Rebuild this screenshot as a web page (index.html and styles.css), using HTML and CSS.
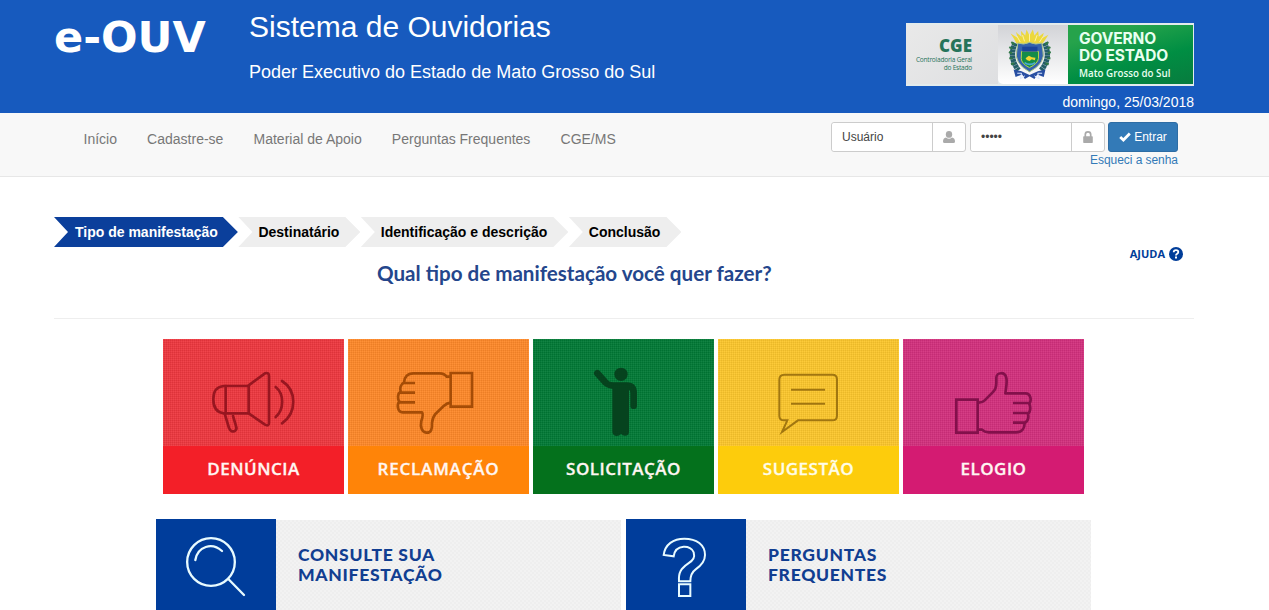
FILE: index.html
```html
<!DOCTYPE html>
<html lang="pt-br">
<head>
  <meta charset="UTF-8" />
  <meta name="viewport" content="width=device-width, initial-scale=1.0" />
  <title>e-OUV - Sistema de Ouvidorias</title>
  <link rel="stylesheet" href="styles.css">
</head>
<body>
  <!-- Header -->
  <header class="header">
    <div class="container header-row">
      <div class="brand">e-OUV</div>
      <div class="titles">
        <h1>Sistema de Ouvidorias</h1>
        <p>Poder Executivo do Estado de Mato Grosso do Sul</p>
      </div>
      <div class="header-right">
        <div class="gov-logo">
          <div class="gov-cge">
            <strong>CGE</strong>
            <span>Controladoria Geral<br>do Estado</span>
          </div>
          <div class="gov-crest">
            <svg viewBox="324 45 208 177" width="69" height="59">
              <!-- sun rays -->
              <path d="M372 86L362 70L384 84L378 66L395 80L393 62L406 76L410 58L419 76L429 58L434 76L445 63L447 80L462 68L458 84L476 74L466 90L458 101H380Z" fill="#ecd83d"/>
              <path d="M391 96L381 78M404 94L398 75M419 94V72M435 94L442 75M449 96L460 79" stroke="#fff2a0" stroke-width="3"/>
              <!-- branches -->
              <path d="M376 99Q355 142 386 181M464 99Q486 142 454 181" fill="none" stroke="#245f68" stroke-width="16" stroke-dasharray="9 1"/>
              <path d="M374 103L364 96M367 116L358 111M366 130L357 126M367 145L358 145M373 160L363 163M466 103L476 96M473 116L482 111M474 130L483 126M473 145L482 145M467 160L477 163" stroke="#317846" stroke-width="6"/>
              <!-- ribbon -->
              <path d="M371 179L395 184L419 195L444 184L467 179L462 201L442 194L434 207L419 199L405 207L397 194L377 201Z" fill="#274ea2"/>
              <path d="M382 190L395 190L391 207L405 198M457 190L444 190L448 207L434 198" fill="none" stroke="#dce8ff" stroke-width="3"/>
              <!-- shield -->
              <path d="M384 99Q401 106 419 97Q438 106 456 99L459 119Q470 159 419 186Q370 159 381 119Z" fill="#3563ad" stroke="#a9c58a" stroke-width="3"/>
              <path d="M395 124H446V145Q444 161 419 173Q394 161 394 145Z" fill="#148c49" stroke="#b4d64c" stroke-width="3"/>
              <path d="M397 110H443V125H397Z" fill="#1b459b"/>
              <path d="M407 145L417 137L426 142L437 143L435 151L426 148L419 153L411 150Z" fill="#f2d632"/>
              <path d="M404 158Q420 169 436 158" fill="none" stroke="#4ba9d4" stroke-width="5"/>
            </svg>
          </div>
          <div class="gov-state">
            <strong>GOVERNO</strong>
            <strong>DO ESTADO</strong>
            <span>Mato Grosso do Sul</span>
          </div>
        </div>
        <div class="date">domingo, 25/03/2018</div>
      </div>
    </div>
  </header>

  <!-- Menu and login -->
  <nav class="navbar">
    <div class="container nav-row">
      <ul class="menu">
        <li><a href="#">Início</a></li>
        <li><a href="#">Cadastre-se</a></li>
        <li><a href="#">Material de Apoio</a></li>
        <li><a href="#">Perguntas Frequentes</a></li>
        <li><a href="#">CGE/MS</a></li>
      </ul>
      <form class="login">
        <div class="login-fields">
          <div class="input-group">
            <input type="text" value="Usuário">
            <span class="addon">
              <svg viewBox="0 0 12 12" width="12" height="12"><ellipse cx="6" cy="3.400" rx="3.200" ry="3.400" fill="#aaa"/><path d="M3 6.500Q6 9 9 6.500Q12 7.200 12 10.500Q12 12 10.500 12H1.500Q0 12 0 10.500Q0 7.200 3 6.500Z" fill="#aaa"/></svg>
            </span>
          </div>
          <div class="input-group">
            <input type="text" value="•••••">
            <span class="addon">
              <svg viewBox="0 0 12 12" width="12" height="12"><path d="M3.300 6V3.500Q3.300 .9 6 .9T8.700 3.500V6" fill="none" stroke="#aaa" stroke-width="1.700"/><rect x="1.200" y="5.200" width="9.600" height="6.800" rx=".7" fill="#aaa"/></svg>
            </span>
          </div>
          <button type="button" class="btn">
            <svg viewBox="0 0 12 10" width="12" height="10"><path d="M1.200 5L4.400 8L10.800 1.600" fill="none" stroke="#fff" stroke-width="2.800"/></svg>
            Entrar
          </button>
        </div>
        <a href="#" class="forgot">Esqueci a senha</a>
      </form>
    </div>
  </nav>

  <main class="container">
    <!-- Steps -->
    <ol class="steps">
      <li class="active">Tipo de manifestação</li>
      <li>Destinatário</li>
      <li>Identificação e descrição</li>
      <li>Conclusão</li>
    </ol>

    <div class="question">
      <h2>Qual tipo de manifestação você quer fazer?</h2>
      <a href="#" class="help">AJUDA
        <svg viewBox="0 0 14 14" width="14" height="14"><circle cx="7" cy="7" r="7" fill="#003d99"/><path d="M4.700 5.300Q4.700 3.200 7 3.200T9.300 5.100Q9.300 6.300 8 6.900Q7 7.300 7 8.500" fill="none" stroke="#fff" stroke-width="1.800"/><rect x="6" y="9.500" width="2" height="2" fill="#fff"/></svg>
      </a>
    </div>

    <!-- Types of report -->
    <div class="tiles">
      <a href="#" class="tile red">
        <svg class="tile-icon" viewBox="24 27 543 321">
          <g fill="none" stroke="#981620" stroke-width="8" stroke-linejoin="round" stroke-linecap="round">
            <path d="M281 168H207Q175 170 175 208Q175 247 207 250H281Z"/>
            <path d="M212 168V250M281 166L330 130Q342 126 342 139V278Q342 290 330 284L281 250"/>
            <path d="M209 251L222 294Q228 308 239 303Q247 299 243 288L234 258"/>
            <path d="M362 171C388 192 388 238 362 261M381 153C426 181 426 249 381 280"/>
          </g>
        </svg>
        <span>DENÚNCIA</span>
      </a>
      <a href="#" class="tile orange">
        <svg class="tile-icon" viewBox="9 27 543 321">
          <g fill="none" stroke="#a54c06" stroke-width="8" stroke-linejoin="round">
            <path d="M317 129H381V230H317Z" stroke-linejoin="miter"/>
            <path d="M317 140H305Q298 130 284 130H205C187 130 178 142 177 157C166 163 164 176 167 184C157 191 157 207 163 214C156 222 156 247 173 247H231Q236 254 229 273C225 292 231 306 244 308C259 309 262 296 261 279Q262 263 272 251L296 228Q306 219 317 218"/>
            <path d="M174 159H210M165 188H210M162 217H210"/>
          </g>
        </svg>
        <span>RECLAMAÇÃO</span>
      </a>
      <a href="#" class="tile green">
        <svg class="tile-icon" viewBox="9 27 543 321">
          <circle cx="273" cy="133" r="20" fill="#06431e"/>
          <path d="M202 130L228 159Q236 167 257 167H290Q311 167 311 190V227" fill="none" stroke="#06431e" stroke-width="20" stroke-linecap="round" stroke-linejoin="round"/>
          <path d="M247 163H297V305Q297 317 285 317Q277 317 273 311Q269 318 259 318Q247 317 247 304Z" fill="#06431e"/>
        </svg>
        <span>SOLICITAÇÃO</span>
      </a>
      <a href="#" class="tile yellow">
        <svg class="tile-icon" viewBox="9 27 543 321">
          <g fill="none" stroke="#a17610" stroke-width="6">
            <path d="M208 134H352Q366 134 366 148V257Q366 271 352 271H249L201 306L217 271H207Q193 271 193 257V149Q193 134 208 134Z"/>
            <path d="M228 179H330M228 221H330"/>
          </g>
        </svg>
        <span>SUGESTÃO</span>
      </a>
      <a href="#" class="tile pink">
        <svg class="tile-icon" viewBox="9 27 543 321">
          <g fill="none" stroke="#83104b" stroke-width="8" stroke-linejoin="round">
            <path d="M169 209H233V308H169Z" stroke-linejoin="miter"/>
            <path d="M233 218Q246 219 254 211L278 187Q289 177 289 158V143C289 126 315 124 319 144C322 159 318 174 316 190H376C393 190 395 211 388 222C393 231 391 247 384 252C387 264 382 274 374 279C374 296 365 307 348 307H266Q254 307 246 299H233"/>
            <path d="M339 219H389M339 249H384M339 278H374"/>
          </g>
        </svg>
        <span>ELOGIO</span>
      </a>
    </div>

    <!-- Shortcuts -->
    <div class="shortcuts">
      <a href="#" class="shortcut">
        <svg viewBox="18 27 360 273" width="120" height="91">
          <g fill="none" stroke="#e8fbff" stroke-width="7" stroke-linecap="round">
            <circle cx="183" cy="156" r="71.500"/>
            <path d="M136 150C143 109 186 96 216 123M235 207L282 255"/>
          </g>
        </svg>
        <span>CONSULTE SUA<br>MANIFESTAÇÃO</span>
      </a>
      <a href="#" class="shortcut">
        <svg viewBox="18 27 360 273" width="120" height="91">
          <g fill="none" stroke="#e8fbff" stroke-width="6">
            <path d="M131 135C135 103 160 86 193 86C230 86 255 105 255 135C255 153 246 165 227 178C213 188 211 199 211 214H177C175 187 183 176 204 161C221 150 225 142 221 127C215 105 166 100 161 139Z"/>
            <path d="M177 223H211V258H177Z"/>
          </g>
        </svg>
        <span>PERGUNTAS<br>FREQUENTES</span>
      </a>
    </div>
  </main>
</body>
</html>
```
FILE: styles.css
```css
* {
  box-sizing: border-box;
}
body {
  margin: 0;
  font-family: "Liberation Sans", Arial, sans-serif;
  font-size: 14px;
  line-height: 20px;
  color: #333;
  background: #fff;
}
a {
  text-decoration: none;
}
svg {
  display: block;
}
.container {
  width: 1140px;
  margin-left: 54px;
}

/* Header */
.header {
  height: 113px;
  background: #175abe;
  color: #fff;
}
.header-row {
  display: grid;
  grid-template-columns: 195px 1fr 288px;
}
.brand {
  padding-top: 12px;
  font: bold 43px/50px "DejaVu Sans", Verdana, sans-serif;
}
.titles h1 {
  margin: 10px 0 0;
  font-size: 30px;
  line-height: 34px;
  font-weight: normal;
}
.titles p {
  margin: 18px 0 0;
  font-size: 18px;
  line-height: 20px;
}
.header-right {
  padding-top: 23px;
}
.gov-logo {
  display: flex;
  height: 63px;
  padding: 2px 1px 2px 0;
  background: #e3ebec;
}
.gov-cge {
  width: 92px;
  padding: 12px 26px 0 0;
  background: linear-gradient(135deg, #e9e9e9, #dedfe1);
  color: #26735a;
  text-align: right;
}
.gov-cge strong {
  display: block;
  font: 800 17px/18px "Open Sans", sans-serif;
}
.gov-cge span {
  display: block;
  margin-left: -10px;
  padding-top: 1px;
  font: 6.5px/8px "Open Sans", sans-serif;
  letter-spacing: -0.2px;
  white-space: nowrap;
}
.gov-crest {
  width: 70px;
  border-radius: 0 0 0 5px;
  background: linear-gradient(#d2d3d7, #fff);
}
.gov-state {
  flex: 1;
  padding: 5px 0 0 11px;
  background: linear-gradient(165deg, #26a34b 20%, #008e43 60%, #087b3e);
  color: #e8fff0;
}
.gov-state strong {
  display: block;
  font: bold 15.5px/17px Inter, sans-serif;
  letter-spacing: -0.1px;
  white-space: nowrap;
}
.gov-state span {
  display: block;
  padding-top: 2px;
  font: 600 9.8px/15px "Open Sans", sans-serif;
  white-space: nowrap;
}
.date {
  margin-top: 6px;
  text-align: right;
}

/* Menu */
.navbar {
  height: 64px;
  background: #f8f8f8;
  border-bottom: 1px solid #e7e7e7;
}
.nav-row {
  display: flex;
  justify-content: space-between;
  padding: 0 16px 0 14px;
}
.menu {
  display: flex;
  gap: 0.15px;
  margin: 0;
  padding: 0 0 0 0.5px;
  list-style: none;
}
.menu a {
  display: block;
  padding: 16px 15px;
  color: #777;
}
.login {
  padding-top: 9px;
  font-size: 12px;
  text-align: right;
}
.login-fields {
  display: flex;
}
.input-group {
  display: flex;
  width: 135px;
  height: 30px;
  margin-right: 4px;
  border: 1px solid #ccc;
  border-radius: 3px;
  background: #fff;
}
.input-group + .input-group {
  margin-right: 3px;
}
.input-group input {
  width: 101px;
  padding: 0 10px;
  border: 0;
  border-right: 1px solid #ccc;
  border-radius: 3px 0 0 3px;
  font: 12px "Liberation Sans", Arial, sans-serif;
  color: #444;
}
.addon {
  flex: 1;
  display: flex;
  align-items: center;
  justify-content: center;
}
.btn {
  display: flex;
  align-items: center;
  justify-content: center;
  gap: 3px;
  width: 70px;
  height: 30px;
  padding: 0;
  border: 1px solid #2e6da4;
  border-radius: 3px;
  background: #337ab7;
  color: #fff;
  font: 12px "Liberation Sans", Arial, sans-serif;
}
.forgot {
  display: block;
  line-height: 16px;
  letter-spacing: -0.05px;
  color: #337ab7;
}

/* Steps */
.steps {
  display: flex;
  gap: 0.5px;
  margin: 40px 0 0;
  padding: 0;
  list-style: none;
}
.steps li {
  padding: 0 21px 0 20px;
  background: #eee;
  color: #000;
  font-weight: bold;
  line-height: 30px;
  clip-path: polygon(0 0, calc(100% - 15px) 0, 100% 50%, calc(100% - 15px) 100%, 0 100%, 14px 50%);
}
.steps .active {
  padding: 0 20px 0 21px;
  background: #0b3f9b;
  color: #fff;
}

.question {
  display: flex;
  justify-content: space-between;
  height: 72px;
  padding: 0 11px 0 323px;
  border-bottom: 1px solid #eee;
}
.question h2 {
  margin: 13px 0 0;
  font: bold 20.6px/26px Lato, sans-serif;
  color: #24468c;
}
.help {
  display: flex;
  gap: 4px;
  height: 14px;
  font: bold 11px/14px "Open Sans", sans-serif;
  color: #003d99;
}

/* Report tiles */
.tiles {
  display: flex;
  gap: 4px;
  padding: 20px 0 0 109px;
}
.tile {
  width: 181px;
  height: 155px;
  color: #fff6f2;
}
.tile-icon {
  width: 181px;
  height: 107px;
  background-image:
    linear-gradient(90deg, rgba(255,255,255,0.035) 50%, rgba(0,0,0,0.035) 50%),
    linear-gradient(rgba(255,255,255,0.035) 50%, rgba(0,0,0,0.035) 50%);
  background-size: 2px 2px;
}
.tile span {
  display: block;
  font: 600 17px/46px "Open Sans", sans-serif;
  letter-spacing: 0.5px;
  text-align: center;
  -webkit-text-stroke: 0.3px;
}
.red {
  background: #f31f28;
}
.red .tile-icon {
  background-color: #ee373e;
}
.orange {
  background: #ff8408;
}
.orange .tile-icon {
  background-color: #ff8928;
}
.orange span {
  letter-spacing: 0.8px;
}
.green {
  background: #04711c;
}
.green .tile-icon {
  background-color: #007935;
}
.yellow {
  background: #fdcc0c;
  color: #fffde8;
}
.yellow .tile-icon {
  background-color: #fdc72c;
}
.pink {
  background: #d41b72;
}
.pink .tile-icon {
  background-color: #d3307d;
}

/* Shortcuts */
.shortcuts {
  display: flex;
  gap: 5px;
  padding: 25px 0 0 102px;
}
.shortcut {
  display: flex;
  width: 465px;
  height: 91px;
  color: #113e91;
  font: 900 17.5px/20px Lato, sans-serif;
  letter-spacing: 0.7px;
}
.shortcut svg {
  background: #003d9b;
}
.shortcut span {
  flex: 1;
  margin-top: 1px;
  padding: 25px 22px;
  background: repeating-conic-gradient(#f2f2f2 0 25%, #eee 0 50%) 0 0 / 4px 4px;
}
```
